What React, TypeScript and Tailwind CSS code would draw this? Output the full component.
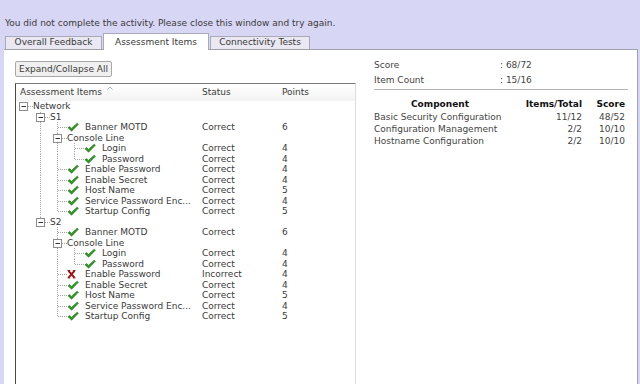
import React from 'react';

type Node = {
  label: string;
  status?: string;
  points?: number;
  bad?: boolean;
  children?: Node[];
};

type Row = Node & { level: number; guides: boolean[]; last: boolean; first: boolean };

const switchItems = (badEnable: boolean): Node[] => [
  { label: 'Banner MOTD', status: 'Correct', points: 6 },
  {
    label: 'Console Line',
    children: [
      { label: 'Login', status: 'Correct', points: 4 },
      { label: 'Password', status: 'Correct', points: 4 },
    ],
  },
  { label: 'Enable Password', status: badEnable ? 'Incorrect' : 'Correct', points: 4, bad: badEnable },
  { label: 'Enable Secret', status: 'Correct', points: 4 },
  { label: 'Host Name', status: 'Correct', points: 5 },
  { label: 'Service Password Enc...', status: 'Correct', points: 4 },
  { label: 'Startup Config', status: 'Correct', points: 5 },
];

const tree: Node[] = [
  {
    label: 'Network',
    children: [
      { label: 'S1', children: switchItems(false) },
      { label: 'S2', children: switchItems(true) },
    ],
  },
];

const flatten = (nodes: Node[], level: number, guides: boolean[], out: Row[]) => {
  nodes.forEach((n, i) => {
    const last = i === nodes.length - 1;
    out.push({ ...n, level, guides, last, first: level === 0 && i === 0 });
    if (n.children) flatten(n.children, level + 1, [...guides, !last], out);
  });
  return out;
};

const rows = flatten(tree, 0, [], []);

const components = [
  { name: 'Basic Security Configuration', items: '11/12', score: '48/52' },
  { name: 'Configuration Management', items: '2/2', score: '10/10' },
  { name: 'Hostname Configuration', items: '2/2', score: '10/10' },
];

const DOT = { stroke: '#a3a3a3', strokeWidth: 1, strokeDasharray: '1 1' };

const Guide: React.FC<{ on: boolean }> = ({ on }) => (
  <svg width="17" height="10.5" className="shrink-0">
    {on && <line x1="7.5" y1="0" x2="7.5" y2="10.5" {...DOT} />}
  </svg>
);

const Joint: React.FC<{ folder: boolean; last: boolean; first: boolean }> = ({ folder, last, first }) => (
  <svg width="17" height="10.5" className="shrink-0">
    {!first && <line x1="7.5" y1="0" x2="7.5" y2={last ? 5.5 : 10.5} {...DOT} />}
    <line x1={folder ? 12 : 8} y1="5.5" x2="17" y2="5.5" {...DOT} />
    {folder && (
      <>
        <rect x="3.5" y="1.5" width="8" height="8" fill="#fff" stroke="#8c8c8c" />
        <line x1="5.5" y1="5.5" x2="10" y2="5.5" stroke="#333" />
      </>
    )}
  </svg>
);

const Check = () => (
  <svg width="12" height="10.5" viewBox="0 0 12 10.5" className="shrink-0">
    <path d="M1 5.8 L2.7 4.6 L4.4 6.4 L10.2 1.2 L11.4 2.2 L4.6 9.2 Z" fill="#2f9a22" stroke="#1d6a14" strokeWidth="0.6" strokeLinejoin="round" />
  </svg>
);

const Cross = () => (
  <svg width="12" height="10.5" viewBox="0 0 12 10.5" className="shrink-0">
    <path d="M1.5 1.8 L7.5 8.6 M7.5 1.8 L1.5 8.6" stroke="#9a1414" strokeWidth="2" />
    <path d="M0.5 1.5 H3.2 M5.8 1.5 H8.5 M0.5 8.9 H3.2 M5.8 8.9 H8.5" stroke="#9a1414" strokeWidth="1" />
  </svg>
);

export default function App() {
  return (
    <div className="relative w-[640px] h-[384px] overflow-hidden bg-[#d8d6f5] font-['DejaVu_Sans',sans-serif] text-[#3a3a3a]">
      <div className="pt-[18px] pl-[5px] h-[29px] text-[9px] leading-[11px]">
        You did not complete the activity. Please close this window and try again.
      </div>

      {/* tabs */}
      <div className="flex items-end pl-[5px] mt-[4px] text-[9px]">
        <div className="w-[97px] h-[13px] flex items-center justify-center bg-[#e9e8f3] border border-b-0 border-[#a9a9b8]">
          Overall Feedback
        </div>
        <div className="relative z-10 ml-px w-[106px] h-[17px] -mb-px pt-[2px] flex items-center justify-center bg-white border border-b-0 border-[#a9a9b8]">
          Assessment Items
        </div>
        <div className="ml-px w-[100px] h-[13px] flex items-center justify-center bg-[#e9e8f3] border border-b-0 border-[#a9a9b8]">
          Connectivity Tests
        </div>
      </div>

      {/* panel */}
      <div className="ml-[4px] mr-[2px] h-[340px] bg-white border-t border-r border-[#a0a0a8] flex text-[9px]">
        <div className="pl-[11px] pt-[11px] shrink-0">
          <button className="h-[16px] w-[97px] px-[3px] bg-[#f0f0f0] border border-[#a8a8a8] rounded-[2px] text-[9px] leading-[14px] text-[#3a3a3a] text-center">
            Expand/Collapse All
          </button>
          <div className="mt-[6px] w-[341px] h-[310px] border-t border-t-[#7a7a7a] border-l border-l-[#4a4a4a] border-r border-r-[#dcdcdc]">
            <div className="relative flex h-[17px] items-center bg-gradient-to-b from-white to-[#f3f3f3]">
              <div className="w-[181px] pl-[4px]">Assessment Items</div>
              <div className="w-[80px] pl-[5px]">Status</div>
              <div className="pl-[5px]">Points</div>
              <svg width="6" height="4" className="absolute left-[91px] top-[2px]">
                <path d="M0.5 3.5 L3 1 L5.5 3.5" fill="none" stroke="#9fb2c6" />
              </svg>
            </div>
            {rows.map((r, i) => (
              <div key={i} className="flex h-[10.5px] leading-[10.5px] whitespace-nowrap">
                <div className="w-[181px] flex items-center">
                  {r.guides.map((g, j) => (
                    <Guide key={j} on={g} />
                  ))}
                  <Joint folder={!!r.children} last={r.last} first={r.first} />
                  {!r.children && (r.bad ? <Cross /> : <Check />)}
                  <span className={r.children ? 'pl-0' : 'pl-[6px]'}>{r.label}</span>
                </div>
                <div className="w-[80px] pl-[5px]">{r.status}</div>
                <div className="pl-[5px]">{r.points}</div>
              </div>
            ))}
          </div>
        </div>

        <div className="pl-[18px] pt-[8px] text-[#444]">
          <div className="grid grid-cols-[126px_auto] leading-[15px]">
            <div>Score</div>
            <div>: 68/72</div>
            <div>Item Count</div>
            <div>: 15/16</div>
          </div>
          <div className="mt-[1px] w-[254px] border-t border-[#b4b4b4]" />
          <div className="mt-[8px] grid grid-cols-[132px_76px_43px] leading-[12px]">
            <div className="h-[13px] font-bold text-[#111] text-center">Component</div>
            <div className="h-[13px] font-bold text-[#111] text-right">Items/Total</div>
            <div className="h-[13px] font-bold text-[#111] text-right">Score</div>
            {components.map((c) => (
              <React.Fragment key={c.name}>
                <div className="whitespace-nowrap">{c.name}</div>
                <div className="text-right">{c.items}</div>
                <div className="text-right">{c.score}</div>
              </React.Fragment>
            ))}
          </div>
        </div>
      </div>
    </div>
  );
}
